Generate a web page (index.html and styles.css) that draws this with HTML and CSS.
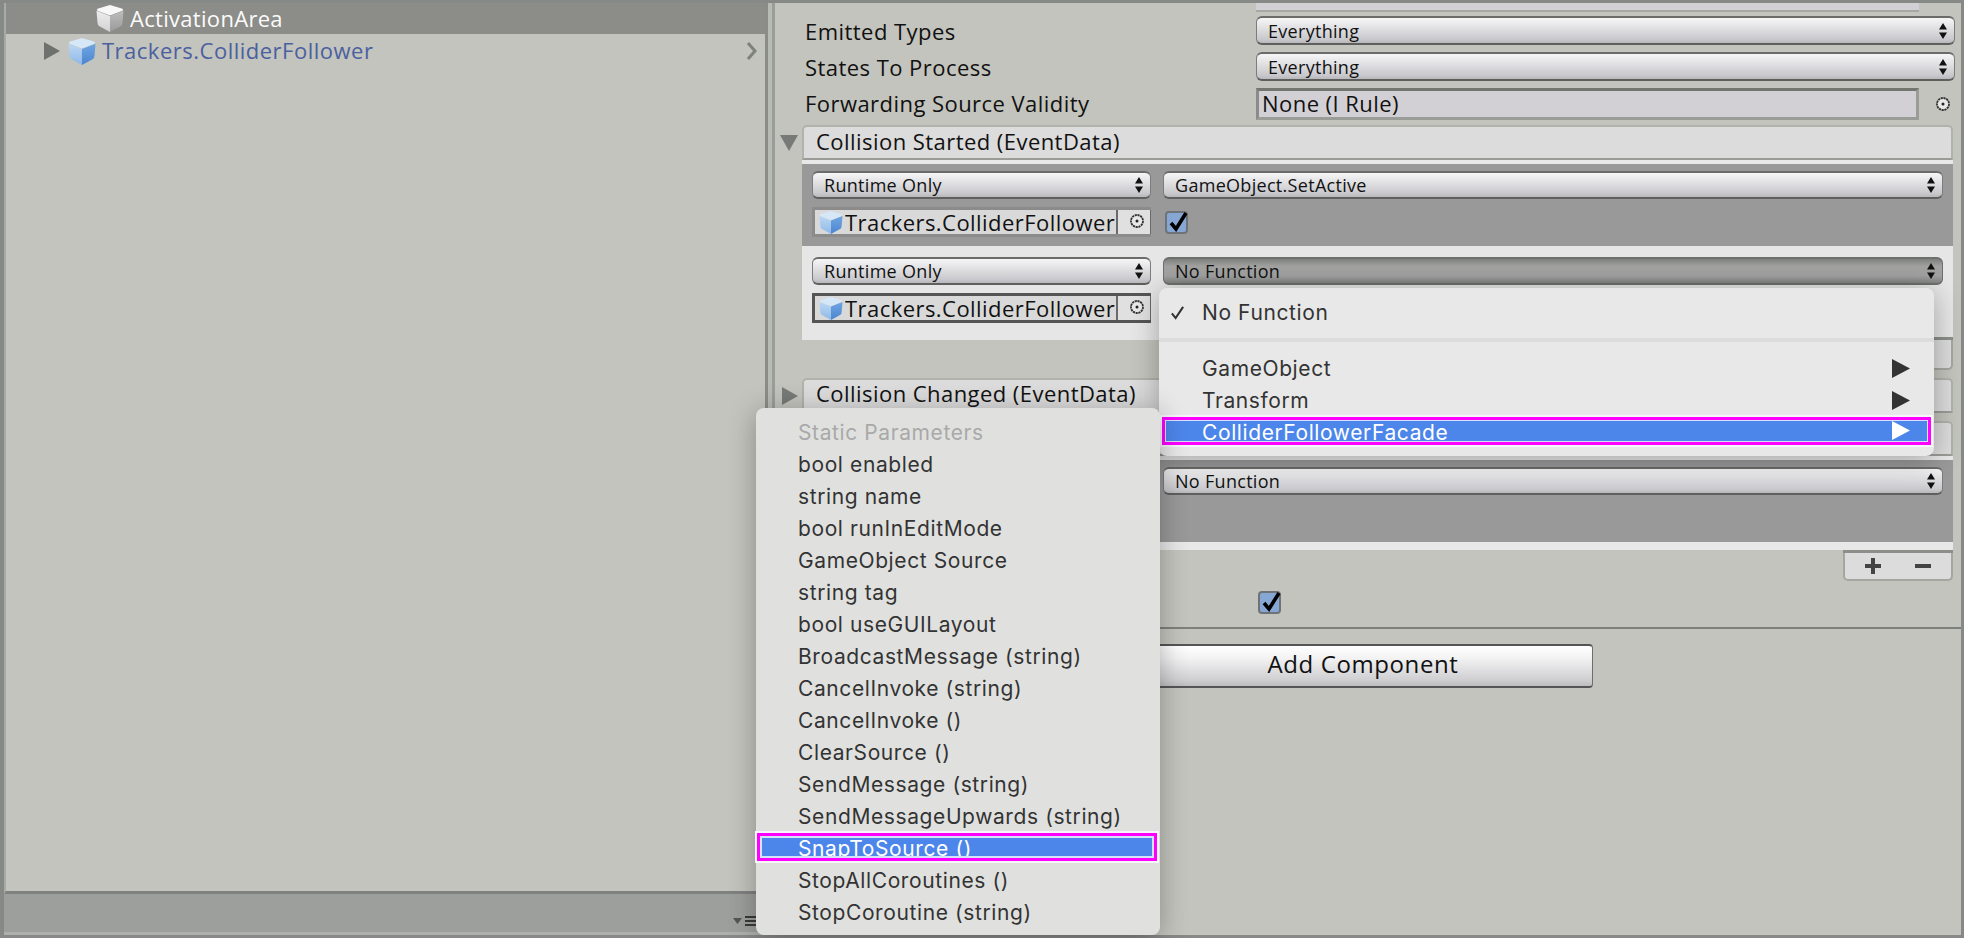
FILE: index.html
```html
<!DOCTYPE html>
<html lang="en">
<head>
<meta charset="utf-8">
<title>Unity Inspector</title>
<link rel="stylesheet" href="styles.css">
</head>
<body>
<svg class="defs" width="0" height="0" aria-hidden="true">
  <defs>
    <linearGradient id="blue-left" x1="0" y1="0" x2="0" y2="1"><stop offset="0" stop-color="#bcd8f4"/><stop offset="1" stop-color="#8fb8e6"/></linearGradient>
    <linearGradient id="blue-right" x1="0" y1="0" x2="0" y2="1"><stop offset="0" stop-color="#6ea6e2"/><stop offset="1" stop-color="#4d85cf"/></linearGradient>
    <linearGradient id="white-left" x1="0" y1="0" x2="0" y2="1"><stop offset="0" stop-color="#ededed"/><stop offset="1" stop-color="#d2d2d2"/></linearGradient>
    <linearGradient id="white-right" x1="0" y1="0" x2="0" y2="1"><stop offset="0" stop-color="#bdbdbd"/><stop offset="1" stop-color="#9a9a9a"/></linearGradient>
  </defs>
  <symbol id="cube-blue" viewBox="0 0 28 28">
    <path d="M14 0 27 4Q28 5 27 6L14 11 1 6Q0 5 1 4Z" fill="#d6e7f8"/>
    <path d="M0 6 14 11.500V28L3 22Q1 21 1 18Z" fill="url(#blue-left)"/>
    <path d="M28 6 14 11.500V28L25 22Q27 21 27 18Z" fill="url(#blue-right)"/>
  </symbol>
  <symbol id="cube-white" viewBox="0 0 28 28">
    <path d="M14 0 27 4Q28 5 27 6L14 11 1 6Q0 5 1 4Z" fill="#f8f8f8"/>
    <path d="M0 6 14 11.500V28L3 22Q1 21 1 18Z" fill="url(#white-left)"/>
    <path d="M28 6 14 11.500V28L25 22Q27 21 27 18Z" fill="url(#white-right)"/>
  </symbol>
  <symbol id="updown" viewBox="0 0 8 16">
    <path d="M4 0 8 6.500H0ZM4 16 0 9.500H8Z" fill="#111"/>
  </symbol>
  <symbol id="picker" viewBox="0 0 16 16">
    <circle cx="8" cy="8" r="6" fill="#e8e8e8" stroke="#333" stroke-width="1.800" stroke-dasharray="2.200 .6"/>
    <circle cx="8" cy="8" r="1.500" fill="#222"/>
  </symbol>
  <symbol id="check" viewBox="0 0 24 24">
    <rect x="1" y="2" width="21" height="21" rx="3" fill="#86a6d3" stroke="#6f7377" stroke-width="2"/>
    <path d="M6 13 11 19 21 3" fill="none" stroke="#000" stroke-width="3.600"/>
  </symbol>
</svg>

<div class="window">
  <section class="hierarchy">
    <div class="tree">
      <div class="tree-row tree-row-selected">
        <svg class="cube"><use href="#cube-white"/></svg>
        <span>ActivationArea</span>
      </div>
      <div class="tree-row tree-row-prefab">
        <svg class="tree-arrow" viewBox="0 0 16 18"><path d="M0 0 16 9 0 18Z"/></svg>
        <svg class="cube cube-small"><use href="#cube-blue"/></svg>
        <span>Trackers.ColliderFollower</span>
        <svg class="chevron" viewBox="0 0 12 18"><path d="M2 1 9 9 2 17" fill="none" stroke="#7f817d" stroke-width="3"/></svg>
      </div>
    </div>
    <div class="hier-foot">
      <svg class="foot-icon" viewBox="0 0 24 10"><path d="M0 2H9L4.500 8Z" fill="#555"/><path d="M12 0H24V2H12ZM12 4H24V6H12ZM12 8H24V10H12Z" fill="#3a3a3a"/></svg>
    </div>
  </section>

  <div class="splitter"></div>

  <section class="inspector">
    <div class="clip-row"><div></div><div class="clip-field"></div></div>

    <div class="prop-row">
      <div class="prop-label">Emitted Types</div>
      <div class="dropdown"><span>Everything</span><svg class="updown"><use href="#updown"/></svg></div>
    </div>
    <div class="prop-row">
      <div class="prop-label">States To Process</div>
      <div class="dropdown"><span>Everything</span><svg class="updown"><use href="#updown"/></svg></div>
    </div>
    <div class="prop-row prop-row-ref">
      <div class="prop-label">Forwarding Source Validity</div>
      <div class="ref-field">None (I Rule)</div>
      <svg class="picker-icon"><use href="#picker"/></svg>
    </div>

    <div class="event event-first">
      <div class="event-head">
        <div class="gutter"><svg class="tri tri-down" viewBox="0 0 18 16"><path d="M0 0H18L9 16Z"/></svg></div>
        <div class="event-title">Collision Started (EventData)</div>
      </div>
      <div class="event-gap"></div>
      <div class="item item-dark">
        <div class="dropdown dropdown-sm"><span>Runtime Only</span><svg class="updown"><use href="#updown"/></svg></div>
        <div class="dropdown dropdown-sm"><span>GameObject.SetActive</span><svg class="updown"><use href="#updown"/></svg></div>
        <div class="obj-field">
          <svg class="cube cube-field"><use href="#cube-blue"/></svg>
          <span class="obj-name">Trackers.ColliderFollower</span>
          <span class="obj-pick"><svg class="picker-icon"><use href="#picker"/></svg></span>
        </div>
        <svg class="checkbox"><use href="#check"/></svg>
      </div>
      <div class="item item-light">
        <div class="dropdown dropdown-sm"><span>Runtime Only</span><svg class="updown"><use href="#updown"/></svg></div>
        <div class="dropdown dropdown-sm dropdown-active"><span>No Function</span><svg class="updown"><use href="#updown"/></svg></div>
        <div class="obj-field obj-field-focus">
          <svg class="cube cube-field"><use href="#cube-blue"/></svg>
          <span class="obj-name">Trackers.ColliderFollower</span>
          <span class="obj-pick"><svg class="picker-icon"><use href="#picker"/></svg></span>
        </div>
      </div>
      <div class="event-foot"></div>
    </div>

    <div class="event event-second">
      <div class="event-head">
        <div class="gutter"><svg class="tri tri-right" viewBox="0 0 16 18"><path d="M0 0 16 9 0 18Z"/></svg></div>
        <div class="event-title event-title-line">Collision Changed (EventData)</div>
      </div>
    </div>

    <div class="event event-third">
      <div class="event-head">
        <div class="gutter"></div>
        <div class="event-title"></div>
      </div>
      <div class="event-gap"></div>
      <div class="item item-dark item-single">
        <div class="dropdown dropdown-sm"></div>
        <div class="dropdown dropdown-sm"><span>No Function</span><svg class="updown"><use href="#updown"/></svg></div>
      </div>
      <div class="item-end"></div>
      <div class="event-foot event-foot-main">
        <span class="foot-btn">
          <svg viewBox="0 0 16 16"><path d="M6 0H10V6H16V10H10V16H6V10H0V6H6Z" fill="#444"/></svg>
          <svg viewBox="0 0 16 16"><path d="M0 6H16V10H0Z" fill="#444"/></svg>
        </span>
      </div>
    </div>

    <div class="enabled-row"><svg class="checkbox"><use href="#check"/></svg></div>
    <div class="rule"></div>
    <div class="add-row"><div class="add-btn">Add Component</div></div>
  </section>

  <div class="menu menu-fn">
    <div class="menu-item"><svg class="tick" viewBox="0 0 16 16"><path d="M2 9 6 14 14 2" fill="none" stroke="#333" stroke-width="2.200"/></svg>No Function</div>
    <div class="menu-sep"></div>
    <div class="menu-item">GameObject<svg class="submenu" viewBox="0 0 18 19"><path d="M0 0 18 9.500 0 19Z"/></svg></div>
    <div class="menu-item">Transform<svg class="submenu" viewBox="0 0 18 19"><path d="M0 0 18 9.500 0 19Z"/></svg></div>
    <div class="menu-hl menu-hl-fn"><div class="menu-hl-fill">ColliderFollowerFacade<svg class="submenu" viewBox="0 0 18 19"><path d="M0 0 18 9.500 0 19Z"/></svg></div></div>
  </div>

  <div class="menu menu-static">
    <div class="menu-item menu-disabled">Static Parameters</div>
    <div class="menu-item">bool enabled</div>
    <div class="menu-item">string name</div>
    <div class="menu-item">bool runInEditMode</div>
    <div class="menu-item">GameObject Source</div>
    <div class="menu-item">string tag</div>
    <div class="menu-item">bool useGUILayout</div>
    <div class="menu-item">BroadcastMessage (string)</div>
    <div class="menu-item">CancelInvoke (string)</div>
    <div class="menu-item">CancelInvoke ()</div>
    <div class="menu-item">ClearSource ()</div>
    <div class="menu-item">SendMessage (string)</div>
    <div class="menu-item">SendMessageUpwards (string)</div>
    <div class="menu-hl menu-hl-static"><div class="menu-hl-fill">SnapToSource ()</div></div>
    <div class="menu-item">StopAllCoroutines ()</div>
    <div class="menu-item">StopCoroutine (string)</div>
  </div>
</div>
</body>
</html>
```

FILE: styles.css
```css
* { box-sizing: border-box; }
html, body { margin: 0; padding: 0; height: 100%; overflow: hidden; }
body { font-family: "Open Sans", "DejaVu Sans", sans-serif; color: #111; background: #8a8d88; }
.defs { position: absolute; }

.window {
  position: relative;
  display: flex;
  width: 1964px;
  height: 938px;
  padding: 3px 3px 3px 4px;
  background: #868985;
}

/* Hierarchy */
.hierarchy { display: flex; flex-direction: column; width: 761px; flex: none; background: #9d9f9c; }
.tree {
  height: 891px;
  background: #c3c4bd;
  border-left: 2px solid #a8aaa5;
  border-bottom: 3px solid #808280;
}
.tree-row { display: flex; align-items: center; font-size: 22px; }
.tree-row-selected { height: 31px; padding-left: 90px; background: #8c8d88; color: #fbfbfb; letter-spacing: .3px; }
.tree-row-prefab { height: 34px; padding-left: 38px; color: #4a60a0; letter-spacing: .5px; }
.tree-row span { line-height: 28px; padding-bottom: 2px; }
.cube { width: 28px; height: 27px; flex: none; margin-right: 6px; }
.cube-small { margin-right: 6px; }
.tree-arrow { width: 16px; height: 18px; margin-right: 8px; fill: #6f716e; flex: none; }
.chevron { width: 12px; height: 18px; margin-left: auto; margin-right: 7px; flex: none; }
.hier-foot {
  flex: 1;
  display: flex;
  align-items: flex-end;
  justify-content: flex-end;
  padding: 0 8px 6px 0;
  border-bottom: 3px solid #aeb0ad;
}
.foot-icon { width: 24px; height: 10px; }

.splitter { width: 10px; flex: none; background: #b8bab4; border-left: 3px solid #8a8c88; border-right: 3px solid #9b9d98; }

/* Inspector */
.inspector { flex: 1; min-width: 0; background: #c3c4bd; font-size: 22px; }
.clip-row { display: grid; grid-template-columns: 481px 1fr; height: 9px; padding-right: 42px; }
.clip-field { background: #d3d0d5; border-bottom: 2px solid #a6a8a2; }

.prop-row {
  display: grid;
  grid-template-columns: 451px 1fr;
  align-items: center;
  height: 29px;
  margin-top: 7px;
  padding: 0 6px 0 30px;
}
.clip-row + .prop-row { margin-top: 4px; }
.prop-row-ref { grid-template-columns: 451px 663px 1fr; height: 32px; padding-right: 0; }
.prop-row-ref .prop-label { padding-bottom: 3px; }
.prop-row-ref .picker-icon { margin-left: 16px; }
.prop-label { letter-spacing: .45px; line-height: 28px; white-space: nowrap; }

.dropdown {
  display: flex;
  align-items: center;
  justify-content: space-between;
  height: 29px;
  padding: 0 7px 0 11px;
  font-size: 18px;
  letter-spacing: .3px;
  border: 1px solid #7b7d7b;
  border-top: 2px solid #6a6c6a;
  border-bottom: 2px solid #5e605e;
  border-radius: 6px;
  background: linear-gradient(#f6f6f7 0%, #e6e6e8 30%, #c9c9cd 85%, #b8b8bc 100%);
}
.dropdown-sm { height: 28px; }
.dropdown-active {
  background: linear-gradient(#7d7f7d 0%, #a2a3a1 30%, #a0a1a0 70%, #828482 100%);
  border-color: #6d6f6d;
}
.updown { width: 8px; height: 16px; flex: none; }

.ref-field {
  height: 32px;
  padding-left: 3px;
  line-height: 24px;
  letter-spacing: .45px;
  background: #d3d0d5;
  border: 3px solid #9a9c98;
  border-top-color: #73756f;
  border-left-color: #8a8c87;
}
.picker-icon { width: 16px; height: 16px; flex: none; }

/* Events */
.event { margin: 0 8px 0 27px; }
.event-first { margin-top: 5px; }
.event-second { margin-top: 8px; }
.event-third { margin-top: 8px; }
.event-head { display: flex; margin-left: -27px; height: 35px; }
.gutter { display: flex; align-items: center; width: 27px; flex: none; padding-left: 5px; }
.tri { fill: #787a77; }
.tri-down { width: 18px; height: 16px; }
.tri-right { width: 16px; height: 18px; margin-left: 2px; }
.event-title {
  flex: 1;
  padding-left: 12px;
  line-height: 28px;
  letter-spacing: .45px;
  background: #dcdcdc;
  border: 2px solid #b0b2ac;
  border-bottom: 2px solid #9a9c97;
  border-radius: 5px 5px 0 0;
}
.event-title-line { line-height: 26px; }
.event-gap { height: 4px; background: #e8e8e8; }

.item {
  display: grid;
  grid-template-columns: 339px 1fr;
  grid-template-rows: 28px 30px;
  column-gap: 12px;
  row-gap: 8px;
  align-items: center;
  padding: 7px 10px 0;
}
.item-dark { height: 82px; background: #999; }
.item-light { height: 94px; padding-top: 11px; background: #e6e6e6; }
.item-single { background: #999; }
.item-end { height: 8px; background: #e8e8e8; }

.obj-field {
  display: flex;
  align-items: center;
  height: 30px;
  padding-left: 4px;
  font-size: 22px;
  letter-spacing: .45px;
  background: #d9d9d9;
  border: 3px solid #8b8b8b;
  border-right: 0;
  white-space: nowrap;
  overflow: hidden;
}
.obj-field-focus { border-color: #555; }
.cube-field { width: 24px; height: 23px; margin-right: 2px; }
.obj-name { width: 271px; flex: none; overflow: hidden; line-height: 24px; padding-bottom: 1px; }
.obj-pick {
  display: flex;
  align-items: center;
  justify-content: center;
  flex: 1;
  align-self: stretch;
  margin: -3px 0;
  padding-left: 6px;
  background: #e0e0e0;
  border: 2px solid #6a6a6a;
  border-top: 0;
  border-right-width: 1px;
}
.checkbox { width: 24px; height: 24px; margin-left: 2px; }

.event-foot { height: 30px; margin-left: auto; width: 110px; background: #dcdcdc; border: 2px solid #a4a69f; border-top: 0; border-radius: 0 0 5px 5px; }
.event-first .event-foot { box-shadow: 0 -3px 0 #8c8e8a; }
.event-foot-main { height: 28px; box-shadow: 0 -3px 0 #8c8e8a; margin-top: 3px; }
.foot-btn { display: flex; align-items: center; justify-content: space-between; height: 100%; padding: 0 20px; }
.foot-btn svg { width: 16px; height: 16px; }

.enabled-row { display: flex; height: 24px; margin-top: 9px; padding-left: 481px; }
.rule { height: 2px; margin-top: 13px; background: #7e807c; }
.add-row { display: flex; margin-top: 15px; padding-left: 358px; }
.add-btn {
  width: 460px;
  height: 44px;
  line-height: 36px;
  text-align: center;
  font-size: 24px;
  letter-spacing: .6px;
  border: 1px solid #6d6f6d;
  border-top: 2px solid #555;
  border-bottom: 2px solid #555;
  border-radius: 0 4px 4px 0;
  background: linear-gradient(#ffffff 0%, #f3f3f4 30%, #cfcfd2 85%, #bdbdc0 100%);
}

/* Popup menus */
.menu {
  position: absolute;
  display: flex;
  flex-direction: column;
  padding: 8px 0;
  font-family: Inter, "Noto Sans", sans-serif;
  font-size: 21px;
  letter-spacing: .6px;
  color: #333;
  border-radius: 8px;
  box-shadow: 0 4px 28px rgba(0, 0, 0, .3);
}
.menu-fn { left: 1159px; top: 288px; width: 775px; height: 168px; background: #e8e8e8; }
.menu-static { left: 756px; top: 408px; width: 404px; height: 527px; padding-bottom: 7px; background: #e0e1df; }
.menu-item { position: relative; display: flex; align-items: center; flex: none; height: 32px; padding-left: 42px; white-space: nowrap; }
.menu-fn .menu-item { padding-left: 43px; padding-right: 24px; }
.menu-disabled { color: #a9a9a9; }
.menu-sep { height: 4px; margin: 10px 0; background: #dcdcdc; flex: none; }
.tick { position: absolute; left: 11px; top: 9px; width: 15px; height: 15px; }
.submenu { width: 18px; height: 19px; margin-left: auto; fill: #333; flex: none; }
.menu-hl {
  flex: none;
  height: 28px;
  padding: 1px;
  color: #fff;
  background: #d6e2f8;
  border: 3px solid #f0f;
  box-shadow: 0 0 0 2px #f4f6fb;
}
.menu-hl-fn { margin: 1px 3px 3px; }
.menu-hl-static { margin: 1px 3px 3px 1px; padding: 2px; }
.menu-hl-fill {
  display: flex;
  align-items: flex-start;
  height: 100%;
  padding-left: 36px;
  padding-right: 17px;
  overflow: hidden;
  background: #4d86ea;
  line-height: 24px;
}
.menu-hl-static .menu-hl-fill { line-height: 22px; }
.menu-hl-fill .submenu { fill: #fff; }
```
